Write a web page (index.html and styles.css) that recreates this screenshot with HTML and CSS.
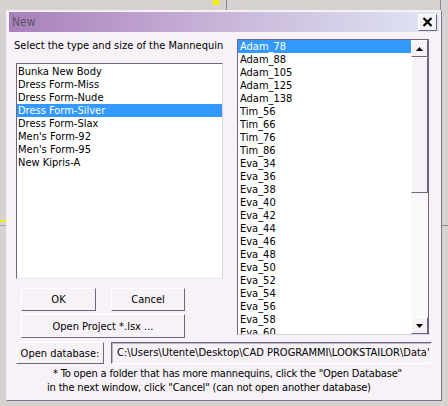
FILE: index.html
```html
<!DOCTYPE html>
<html>
<head>
<meta charset="utf-8">
<link rel="stylesheet" href="styles.css">
</head>
<body>
<div class="desk">
  <div class="bg-line bg-yellow-top"></div>
  <div class="bg-line bg-vline-a"></div>
  <div class="bg-line bg-vline-b"></div>
  <div class="bg-line bg-yellow-left"></div>
  <div class="bg-line bg-grey-left"></div>
  <div class="bg-line bg-grey-right"></div>

  <div class="dialog">
    <div class="titlebar">
      <span class="title">New</span>
      <button class="close" aria-label="Close">
        <svg width="11" height="10" viewBox="0 0 11 10"><path d="M1.5 1 L9.5 9 M9.5 1 L1.5 9" stroke="#000" stroke-width="2.2" fill="none"/></svg>
      </button>
    </div>
    <div class="content">
      <div class="main">
        <div class="leftcol">
          <div class="label">Select the type and size of the Mannequin</div>
          <div class="listbox left-list">
            <div class="item">Bunka New Body</div>
            <div class="item">Dress Form-Miss</div>
            <div class="item">Dress Form-Nude</div>
            <div class="item selected">Dress Form-Silver</div>
            <div class="item">Dress Form-Slax</div>
            <div class="item">Men's Form-92</div>
            <div class="item">Men's Form-95</div>
            <div class="item">New Kipris-A</div>
          </div>
          <div class="buttons">
            <button class="btn">OK</button>
            <button class="btn">Cancel</button>
            <button class="btn wide">Open Project *.lsx ...</button>
          </div>
        </div>
        <div class="listbox right-list">
          <div class="items">
            <div class="item selected">Adam_78</div>
            <div class="item">Adam_88</div>
            <div class="item">Adam_105</div>
            <div class="item">Adam_125</div>
            <div class="item">Adam_138</div>
            <div class="item">Tim_56</div>
            <div class="item">Tim_66</div>
            <div class="item">Tim_76</div>
            <div class="item">Tim_86</div>
            <div class="item">Eva_34</div>
            <div class="item">Eva_36</div>
            <div class="item">Eva_38</div>
            <div class="item">Eva_40</div>
            <div class="item">Eva_42</div>
            <div class="item">Eva_44</div>
            <div class="item">Eva_46</div>
            <div class="item">Eva_48</div>
            <div class="item">Eva_50</div>
            <div class="item">Eva_52</div>
            <div class="item">Eva_54</div>
            <div class="item">Eva_56</div>
            <div class="item">Eva_58</div>
            <div class="item">Eva_60</div>
          </div>
          <div class="scrollbar">
            <div class="sb-btn"><svg width="7" height="4" viewBox="0 0 7 4"><path d="M0 4 L3.5 0 L7 4 Z" fill="#000"/></svg></div>
            <div class="sb-thumb"></div>
            <div class="sb-track"></div>
            <div class="sb-btn"><svg width="7" height="4" viewBox="0 0 7 4"><path d="M0 0 L7 0 L3.5 4 Z" fill="#000"/></svg></div>
          </div>
        </div>
      </div>
      <div class="dbrow">
        <button class="btn db">Open database:</button>
        <div class="path">C:\Users\Utente\Desktop\CAD PROGRAMMI\LOOKSTAILOR\Data'</div>
      </div>
      <div class="note">
        <div class="n1">* To open a folder that has more mannequins, click the "Open Database"</div>
        <div class="n2">in the next window, click "Cancel" (can not open another database)</div>
      </div>
    </div>
  </div>
</div>
</body>
</html>
```
FILE: styles.css
```css
html, body {
  margin: 0;
  padding: 0;
}
body {
  width: 448px;
  height: 406px;
  overflow: hidden;
  background: #d5d2cf;
  font-family: "DejaVu Sans Condensed", "DejaVu Sans", sans-serif;
  font-stretch: condensed;
  font-size: 11px;
  color: #000;
}
.desk {
  position: relative;
  width: 448px;
  height: 406px;
}
.bg-line { position: absolute; }
.bg-yellow-top { left: 213px; top: 0; width: 6px; height: 5px; background: #f4f000; }
.bg-vline-a { left: 226px; top: 0; width: 1px; height: 11px; background: #8c8894; }
.bg-vline-b { left: 440px; top: 0; width: 1px; height: 11px; background: #8c8894; }
.bg-yellow-left { left: 0; top: 220px; width: 6px; height: 2px; background: #f4f000; }
.bg-grey-left { left: 0; top: 225px; width: 6px; height: 1px; background: #a8a4ac; }
.bg-grey-right { left: 441px; top: 225px; width: 7px; height: 1px; background: #8c8894; }

.dialog {
  position: absolute;
  left: 6px;
  top: 10px;
  width: 430px;
  height: 386px;
  padding: 1px 2px 2px 2px;
  background: #f7f2f7;
  border-top: 1px solid #f3eff5;
  border-left: 1px solid #f3eff5;
  border-right: 1px solid #7d7289;
  border-bottom: 1px solid #7d7289;
  display: flex;
  flex-direction: column;
}
.titlebar {
  height: 20px;
  display: flex;
  align-items: center;
  justify-content: space-between;
  background: linear-gradient(to right, #a97fbb 0%, #c6b0d6 45%, #dfe6f3 100%);
  padding: 0 2px 0 3px;
}
.title {
  font-size: 12px;
  color: #5c5364;
}
.close {
  width: 19px;
  height: 17px;
  padding: 0;
  margin: 0;
  background: #f4f1f6;
  border-top: 1px solid #ffffff;
  border-left: 1px solid #ffffff;
  border-right: 1px solid #6f6580;
  border-bottom: 1px solid #6f6580;
  display: flex;
  align-items: center;
  justify-content: center;
}
.content {
  padding: 7px 0 0 7px;
  display: flex;
  flex-direction: column;
}
.main {
  display: grid;
  grid-template-columns: 207px 192px;
  column-gap: 14px;
  align-items: start;
}
.leftcol {
  display: flex;
  flex-direction: column;
}
.label {
  margin-left: -2px;
  line-height: 13px;
  height: 13px;
  white-space: nowrap;
}
.listbox {
  box-sizing: border-box;
  background: #ffffff;
  border-top: 1px solid #6f6580;
  border-left: 1px solid #6f6580;
  border-right: 1px solid #d9d3df;
  border-bottom: 1px solid #ece7ef;
  overflow: hidden;
}
.left-list {
  margin-top: 11px;
  height: 216px;
  padding-top: 1px;
}
.item {
  height: 13px;
  line-height: 13px;
  padding-left: 1px;
  white-space: nowrap;
}
.right-list .item { padding-left: 2px; }
.item.selected {
  background: #3399ff;
  color: #ffffff;
}
.buttons {
  margin-top: 9px;
  margin-left: 5px;
  display: grid;
  grid-template-columns: 75px 74px;
  column-gap: 15px;
  row-gap: 3px;
}
.btn {
  font: inherit;
  font-size: 11px;
  color: #000;
  background: #f7f2f7;
  margin: 0;
  padding: 0;
  height: 23px;
  border-top: 1px solid #ffffff;
  border-left: 1px solid #ffffff;
  border-right: 1px solid #6f6580;
  border-bottom: 1px solid #6f6580;
}
.btn.wide { grid-column: 1 / span 2; height: 24px; }
.right-list {
  height: 296px;
  display: flex;
  border-right: 1px solid #6f6580;
  border-bottom: 1px solid #d9d3df;
}
.items {
  flex: 1;
  overflow: hidden;
}
.scrollbar {
  width: 17px;
  display: flex;
  flex-direction: column;
  background: #fbf8fb;
}
.sb-btn, .sb-thumb {
  box-sizing: border-box;
  background: #f7f2f7;
  border-top: 1px solid #ffffff;
  border-left: 1px solid #ffffff;
  border-right: 1px solid #6f6580;
  border-bottom: 1px solid #6f6580;
  display: flex;
  align-items: center;
  justify-content: center;
}
.sb-btn { height: 17px; }
.sb-thumb { height: 136px; }
.sb-track { flex: 1; }
.dbrow {
  margin-top: 4px;
  display: flex;
  gap: 7px;
}
.btn.db { width: 88px; height: 22px; }
.path {
  box-sizing: border-box;
  width: 321px;
  height: 22px;
  line-height: 19px;
  padding-left: 5px;
  white-space: nowrap;
  overflow: hidden;
  background: #f7f2f7;
  border-top: 1px solid #6f6580;
  border-left: 1px solid #6f6580;
  border-right: 1px solid #ffffff;
  border-bottom: 1px solid #ffffff;
  box-shadow: inset 1px 1px 0 #bdb5c5;
}
.note {
  margin-top: 3px;
  line-height: 14px;
  letter-spacing: -0.17px;
}
.n1 { margin-left: 37px; white-space: nowrap; }
.n2 { margin-left: 31px; white-space: nowrap; }
```
